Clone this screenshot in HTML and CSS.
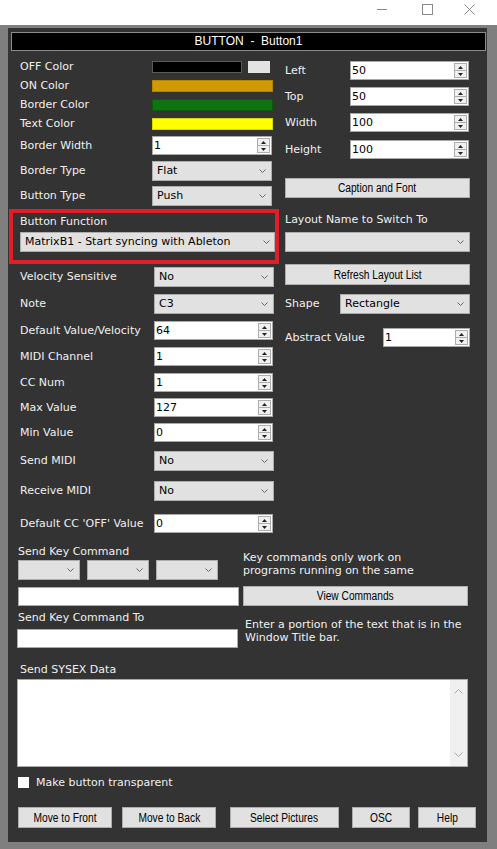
FILE: index.html
```html
<!DOCTYPE html>
<html>
<head>
<meta charset="utf-8">
<title>BUTTON - Button1</title>
<link rel="stylesheet" href="styles.css">
</head>
<body>
<div class="titlebar">
  <svg class="wc wc-min" width="11" height="11" viewBox="0 0 11 11"><path d="M0 5.5H10" stroke="#8a8a8a" stroke-width="1" fill="none"/></svg>
  <svg class="wc wc-max" width="11" height="11" viewBox="0 0 11 11"><rect x="0.5" y="0.5" width="10" height="10" stroke="#8a8a8a" fill="none"/></svg>
  <svg class="wc wc-close" width="11" height="11" viewBox="0 0 11 11"><path d="M0.5 0.5L10.5 10.5M10.5 0.5L0.5 10.5" stroke="#8a8a8a" fill="none"/></svg>
</div>
<div class="frame">
  <div class="panel">
    <div class="header">BUTTON&nbsp; -&nbsp; Button1</div>

    <div class="cols">
      <div class="col-left">
        <div class="row sw"><span class="lbl">OFF Color</span><span class="swatch off"></span><span class="swatch offalt"></span></div>
        <div class="row sw"><span class="lbl">ON Color</span><span class="swatch on"></span></div>
        <div class="row sw"><span class="lbl">Border Color</span><span class="swatch border"></span></div>
        <div class="row sw"><span class="lbl">Text Color</span><span class="swatch text"></span></div>

        <div class="row mt3"><span class="lbl">Border Width</span>
          <span class="input w120"><span class="val">1</span><span class="spin"><span class="sp up"><svg width="5" height="3" viewBox="0 0 5 3"><path d="M0 3H5L2.5 0Z" fill="#222"/></svg></span><span class="sp dn"><svg width="5" height="3" viewBox="0 0 5 3"><path d="M0 0H5L2.5 3Z" fill="#222"/></svg></span></span></span>
        </div>
        <div class="row mt6"><span class="lbl">Border Type</span>
          <span class="select w120"><span>Flat</span><svg class="chev" width="7" height="4" viewBox="0 0 7 4"><path d="M0.5 0.5L3.5 3.5L6.5 0.5" fill="none" stroke="#666"/></svg></span>
        </div>
        <div class="row mt5"><span class="lbl">Button Type</span>
          <span class="select w120"><span>Push</span><svg class="chev" width="7" height="4" viewBox="0 0 7 4"><path d="M0.5 0.5L3.5 3.5L6.5 0.5" fill="none" stroke="#666"/></svg></span>
        </div>

        <div class="fnbox">
          <div class="fnlbl">Button Function</div>
          <span class="select w255"><span>MatrixB1 - Start syncing with Ableton</span><svg class="chev" width="7" height="4" viewBox="0 0 7 4"><path d="M0.5 0.5L3.5 3.5L6.5 0.5" fill="none" stroke="#666"/></svg></span>
        </div>

        <div class="row lo mt3"><span class="lbl">Velocity Sensitive</span>
          <span class="select w120"><span>No</span><svg class="chev" width="7" height="4" viewBox="0 0 7 4"><path d="M0.5 0.5L3.5 3.5L6.5 0.5" fill="none" stroke="#666"/></svg></span>
        </div>
        <div class="row lo mt7"><span class="lbl">Note</span>
          <span class="select w120"><span>C3</span><svg class="chev" width="7" height="4" viewBox="0 0 7 4"><path d="M0.5 0.5L3.5 3.5L6.5 0.5" fill="none" stroke="#666"/></svg></span>
        </div>
        <div class="row lo mt7"><span class="lbl">Default Value/Velocity</span>
          <span class="input w119"><span class="val">64</span><span class="spin"><span class="sp up"><svg width="5" height="3" viewBox="0 0 5 3"><path d="M0 3H5L2.5 0Z" fill="#222"/></svg></span><span class="sp dn"><svg width="5" height="3" viewBox="0 0 5 3"><path d="M0 0H5L2.5 3Z" fill="#222"/></svg></span></span></span>
        </div>
        <div class="row lo mt7"><span class="lbl">MIDI Channel</span>
          <span class="input w119"><span class="val">1</span><span class="spin"><span class="sp up"><svg width="5" height="3" viewBox="0 0 5 3"><path d="M0 3H5L2.5 0Z" fill="#222"/></svg></span><span class="sp dn"><svg width="5" height="3" viewBox="0 0 5 3"><path d="M0 0H5L2.5 3Z" fill="#222"/></svg></span></span></span>
        </div>
        <div class="row lo mt7"><span class="lbl">CC Num</span>
          <span class="input w119"><span class="val">1</span><span class="spin"><span class="sp up"><svg width="5" height="3" viewBox="0 0 5 3"><path d="M0 3H5L2.5 0Z" fill="#222"/></svg></span><span class="sp dn"><svg width="5" height="3" viewBox="0 0 5 3"><path d="M0 0H5L2.5 3Z" fill="#222"/></svg></span></span></span>
        </div>
        <div class="row lo mt6"><span class="lbl">Max Value</span>
          <span class="input w119"><span class="val">127</span><span class="spin"><span class="sp up"><svg width="5" height="3" viewBox="0 0 5 3"><path d="M0 3H5L2.5 0Z" fill="#222"/></svg></span><span class="sp dn"><svg width="5" height="3" viewBox="0 0 5 3"><path d="M0 0H5L2.5 3Z" fill="#222"/></svg></span></span></span>
        </div>
        <div class="row lo mt6"><span class="lbl">Min Value</span>
          <span class="input w119"><span class="val">0</span><span class="spin"><span class="sp up"><svg width="5" height="3" viewBox="0 0 5 3"><path d="M0 3H5L2.5 0Z" fill="#222"/></svg></span><span class="sp dn"><svg width="5" height="3" viewBox="0 0 5 3"><path d="M0 0H5L2.5 3Z" fill="#222"/></svg></span></span></span>
        </div>
        <div class="row lo mt9"><span class="lbl">Send MIDI</span>
          <span class="select w120"><span>No</span><svg class="chev" width="7" height="4" viewBox="0 0 7 4"><path d="M0.5 0.5L3.5 3.5L6.5 0.5" fill="none" stroke="#666"/></svg></span>
        </div>
        <div class="row lo mt10"><span class="lbl">Receive MIDI</span>
          <span class="select w120"><span>No</span><svg class="chev" width="7" height="4" viewBox="0 0 7 4"><path d="M0.5 0.5L3.5 3.5L6.5 0.5" fill="none" stroke="#666"/></svg></span>
        </div>
        <div class="row lo mt13"><span class="lbl">Default CC 'OFF' Value</span>
          <span class="input w119"><span class="val">0</span><span class="spin"><span class="sp up"><svg width="5" height="3" viewBox="0 0 5 3"><path d="M0 3H5L2.5 0Z" fill="#222"/></svg></span><span class="sp dn"><svg width="5" height="3" viewBox="0 0 5 3"><path d="M0 0H5L2.5 3Z" fill="#222"/></svg></span></span></span>
        </div>
      </div>

      <div class="col-right">
        <div class="rrow"><span class="rlbl l65">Left</span>
          <span class="input w119"><span class="val">50</span><span class="spin"><span class="sp up"><svg width="5" height="3" viewBox="0 0 5 3"><path d="M0 3H5L2.5 0Z" fill="#222"/></svg></span><span class="sp dn"><svg width="5" height="3" viewBox="0 0 5 3"><path d="M0 0H5L2.5 3Z" fill="#222"/></svg></span></span></span>
        </div>
        <div class="rrow mt7"><span class="rlbl l65">Top</span>
          <span class="input w119"><span class="val">50</span><span class="spin"><span class="sp up"><svg width="5" height="3" viewBox="0 0 5 3"><path d="M0 3H5L2.5 0Z" fill="#222"/></svg></span><span class="sp dn"><svg width="5" height="3" viewBox="0 0 5 3"><path d="M0 0H5L2.5 3Z" fill="#222"/></svg></span></span></span>
        </div>
        <div class="rrow mt7"><span class="rlbl l65">Width</span>
          <span class="input w119"><span class="val">100</span><span class="spin"><span class="sp up"><svg width="5" height="3" viewBox="0 0 5 3"><path d="M0 3H5L2.5 0Z" fill="#222"/></svg></span><span class="sp dn"><svg width="5" height="3" viewBox="0 0 5 3"><path d="M0 0H5L2.5 3Z" fill="#222"/></svg></span></span></span>
        </div>
        <div class="rrow mt8"><span class="rlbl l65">Height</span>
          <span class="input w119"><span class="val">100</span><span class="spin"><span class="sp up"><svg width="5" height="3" viewBox="0 0 5 3"><path d="M0 3H5L2.5 0Z" fill="#222"/></svg></span><span class="sp dn"><svg width="5" height="3" viewBox="0 0 5 3"><path d="M0 0H5L2.5 3Z" fill="#222"/></svg></span></span></span>
        </div>
        <div class="btn full mt19"><span>Caption and Font</span></div>
        <div class="rtitle">Layout Name to Switch To</div>
        <span class="select w185 mt5"><span></span><svg class="chev" width="7" height="4" viewBox="0 0 7 4"><path d="M0.5 0.5L3.5 3.5L6.5 0.5" fill="none" stroke="#666"/></svg></span>
        <div class="btn full tall mt12"><span>Refresh Layout List</span></div>
        <div class="rrow mt9"><span class="rlbl l55">Shape</span>
          <span class="select w130"><span>Rectangle</span><svg class="chev" width="7" height="4" viewBox="0 0 7 4"><path d="M0.5 0.5L3.5 3.5L6.5 0.5" fill="none" stroke="#666"/></svg></span>
        </div>
        <div class="rrow mt14"><span class="rlbl l98">Abstract Value</span>
          <span class="input w87"><span class="val">1</span><span class="spin"><span class="sp up"><svg width="5" height="3" viewBox="0 0 5 3"><path d="M0 3H5L2.5 0Z" fill="#222"/></svg></span><span class="sp dn"><svg width="5" height="3" viewBox="0 0 5 3"><path d="M0 0H5L2.5 3Z" fill="#222"/></svg></span></span></span>
        </div>
      </div>
    </div>

    <div class="bottom">
      <div class="kgrid">
        <div class="kleft">
          <div class="blbl">Send Key Command</div>
          <div class="keysel">
            <span class="select w62"><span></span><svg class="chev" width="7" height="4" viewBox="0 0 7 4"><path d="M0.5 0.5L3.5 3.5L6.5 0.5" fill="none" stroke="#666"/></svg></span>
            <span class="select w62"><span></span><svg class="chev" width="7" height="4" viewBox="0 0 7 4"><path d="M0.5 0.5L3.5 3.5L6.5 0.5" fill="none" stroke="#666"/></svg></span>
            <span class="select w62"><span></span><svg class="chev" width="7" height="4" viewBox="0 0 7 4"><path d="M0.5 0.5L3.5 3.5L6.5 0.5" fill="none" stroke="#666"/></svg></span>
          </div>
        </div>
        <div class="note n1">Key commands only work on<br>programs running on the same</div>

        <div class="kleft rowb"><span class="input plain w221 ml1"></span></div>
        <div class="rowb"><div class="btn w225"><span>View Commands</span></div></div>

        <div class="kleft">
          <div class="blbl mt5">Send Key Command To</div>
          <span class="input plain w221 mt4"></span>
        </div>
        <div class="note n2">Enter a portion of the text that is in the<br>Window Title bar.</div>
      </div>

      <div class="blbl sx">Send SYSEX Data</div>
      <div class="textarea">
        <div class="vscroll">
          <svg width="9" height="5" viewBox="0 0 9 5"><path d="M0.5 4.5L4.5 0.5L8.5 4.5" fill="none" stroke="#a8a8a8"/></svg>
          <svg width="9" height="5" viewBox="0 0 9 5"><path d="M0.5 0.5L4.5 4.5L8.5 0.5" fill="none" stroke="#a8a8a8"/></svg>
        </div>
      </div>

      <div class="check"><span class="box"></span><span class="clbl">Make button transparent</span></div>

      <div class="actions">
        <div class="btn b-front"><span>Move to Front</span></div>
        <div class="btn b-back"><span>Move to Back</span></div>
        <div class="btn b-pics"><span>Select Pictures</span></div>
        <div class="btn b-osc"><span>OSC</span></div>
        <div class="btn b-help"><span>Help</span></div>
      </div>
    </div>
  </div>
</div>
</body>
</html>
```

FILE: styles.css
```css
* { box-sizing: border-box; }

html, body {
  margin: 0;
  padding: 0;
}

body {
  width: 497px;
  height: 849px;
  overflow: hidden;
  background: #7f7f7f;
  font-family: "DejaVu Sans", Verdana, sans-serif;
  font-size: 11px;
  color: #f0f0f0;
}

/* window title bar */
.titlebar {
  height: 25px;
  background: #ffffff;
  display: flex;
  align-items: flex-start;
}
.wc { display: block; flex: none; }
.wc-min { margin: 4px 0 0 377px; }
.wc-max { margin: 4px 0 0 34px; }
.wc-close { margin: 4px 0 0 31px; }

/* frame + panel */
.frame {
  padding: 3px 10px 7px 8px;
}
.panel {
  width: 479px;
  height: 814px;
  background: #333333;
  padding-top: 4px;
}
.header {
  margin: 0 1px 0 3px;
  height: 19px;
  background: #000000;
  border: 1px solid #8c8c8c;
  color: #ffffff;
  font-family: "Liberation Sans", Arial, sans-serif;
  font-size: 12px;
  line-height: 17px;
  text-align: center;
}

.cols {
  display: flex;
  margin-top: 6px;
  padding-left: 1px;
}

/* left column */
.col-left {
  width: 270px;
  flex: none;
  display: flex;
  flex-direction: column;
}
.row {
  display: flex;
  align-items: center;
  padding-left: 11px;
}
.row.sw { height: 19px; padding-top: 1px; }
.row.sw .swatch { margin-top: -1px; }
.lbl {
  width: 132px;
  flex: none;
  white-space: nowrap;
  line-height: 14px;
}
.row.lo .lbl { width: 134px; }

.swatch { display: block; height: 12px; flex: none; }
.swatch.off { width: 90px; background: #000; border: 1px solid #5a5a5a; }
.swatch.offalt { width: 22px; margin-left: 6px; background: #e3e3e3; }
.swatch.on { width: 121px; background: #cf9a03; border: 1px solid #b28500; }
.swatch.border { width: 121px; background: #0f730f; border: 1px solid #0a5a0a; }
.swatch.text { width: 121px; background: #ffff00; border: 1px solid #d8d800; }

/* controls */
.input {
  display: flex;
  align-items: center;
  justify-content: space-between;
  flex: none;
  height: 19px;
  background: #ffffff;
  border: 1px solid #a9a9a9;
  color: #000;
  padding-left: 1px;
}
.input .val { line-height: 14px; }
.spin {
  display: flex;
  flex-direction: column;
  width: 13px;
  height: 15px;
  margin-right: 1px;
  border: 1px solid #adadad;
  background: #f0f0f0;
}
.sp {
  flex: 1;
  display: flex;
  align-items: center;
  justify-content: center;
}
.sp svg { display: block; }
.sp.up { border-bottom: 1px solid #adadad; }

.select {
  display: flex;
  align-items: center;
  justify-content: space-between;
  flex: none;
  height: 20px;
  background: #e1e1e1;
  border: 1px solid #adadad;
  color: #000;
  padding: 0 5px 0 4px;
  white-space: nowrap;
}
.select > span { line-height: 14px; }
.chev { display: block; flex: none; }

.btn {
  display: flex;
  align-items: center;
  justify-content: center;
  height: 20px;
  background: #e1e1e1;
  border: 1px solid #adadad;
  color: #000;
  font-family: "Liberation Sans", Arial, sans-serif;
  font-size: 12px;
  white-space: nowrap;
}
.btn > span {
  display: inline-block;
  transform: scaleX(0.85);
}
.btn.full { width: 185px; }
.btn.tall { height: 21px; }

.w62 { width: 62px; }
.w87 { width: 87px; }
.w119 { width: 119px; }
.w120 { width: 120px; }
.w130 { width: 130px; }
.w185 { width: 185px; }
.w221 { width: 221px; }
.w225 { width: 225px; }
.w255 { width: 255px; }

.mt3 { margin-top: 3px; }
.mt4 { margin-top: 4px; }
.mt5 { margin-top: 5px; }
.mt6 { margin-top: 6px; }
.mt7 { margin-top: 7px; }
.mt8 { margin-top: 8px; }
.mt9 { margin-top: 9px; }
.mt10 { margin-top: 10px; }
.mt12 { margin-top: 12px; }
.mt13 { margin-top: 13px; }
.mt14 { margin-top: 14px; }
.mt19 { margin-top: 19px; }
.ml1 { margin-left: 1px; }

/* highlighted function box */
.fnbox {
  margin-top: 3px;
  width: 270px;
  height: 55px;
  border: 4px solid #e31d26;
  padding: 2px 0 0 7px;
}
.fnlbl { line-height: 14px; margin-bottom: 3px; }
.fnbox .select { padding-right: 4px; }

/* right column */
.col-right {
  width: 185px;
  flex: none;
  margin-left: 6px;
  padding-top: 4px;
  display: flex;
  flex-direction: column;
}
.rrow { display: flex; align-items: center; }
.rlbl { flex: none; line-height: 14px; white-space: nowrap; }
.l55 { width: 55px; }
.l65 { width: 65px; }
.l98 { width: 98px; }
.rtitle { margin-top: 15px; line-height: 14px; }

/* bottom section */
.bottom {
  margin-top: 12px;
  padding-left: 9px;
}
.kgrid {
  display: grid;
  grid-template-columns: 222px 225px;
  column-gap: 4px;
  align-items: start;
}
.kleft { display: flex; flex-direction: column; }
.blbl { line-height: 14px; padding-left: 1px; }
.keysel {
  display: flex;
  gap: 7px;
  margin: 1px 0 0 1px;
}
.note { line-height: 13px; white-space: nowrap; }
.note.n1 { margin-top: 6px; }
.note.n2 { margin: 12px 0 0 2px; }
.rowb { margin-top: 6px; }
.rowb .input { margin-top: 1px; }
.input.plain { justify-content: flex-start; }

.blbl.sx { margin-top: 15px; padding-left: 3px; }
.textarea {
  margin-top: 2px;
  width: 451px;
  height: 88px;
  background: #ffffff;
  border: 1px solid #a9a9a9;
  display: flex;
  justify-content: flex-end;
}
.vscroll {
  width: 17px;
  height: 100%;
  background: #f0f0f0;
  display: flex;
  flex-direction: column;
  align-items: center;
  justify-content: space-between;
  padding: 9px 0 9px;
}
.vscroll svg { display: block; }

.check {
  display: flex;
  align-items: center;
  margin-top: 9px;
  height: 13px;
  padding-left: 1px;
}
.box {
  display: block;
  width: 11px;
  height: 11px;
  background: #ffffff;
}
.clbl { margin-left: 7px; line-height: 14px; }

.actions {
  display: flex;
  margin-top: 18px;
  padding-left: 1px;
}
.actions .btn { height: 21px; }
.b-front { width: 94px; }
.b-back { width: 94px; margin-left: 10px; }
.b-pics { width: 109px; margin-left: 14px; }
.b-osc { width: 58px; margin-left: 13px; }
.b-help { width: 58px; margin-left: 8px; }
```
